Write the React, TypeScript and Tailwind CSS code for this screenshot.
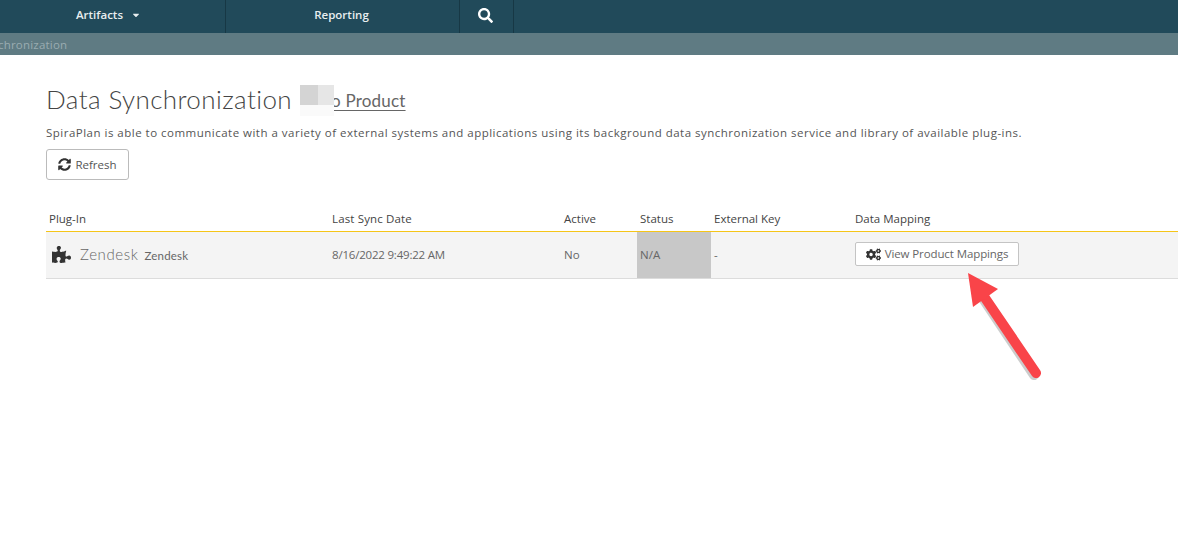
import { FaCaretDown, FaCogs, FaPuzzlePiece, FaSearch, FaSyncAlt } from "react-icons/fa";

const body = { fontFamily: '"Open Sans", "Liberation Sans", sans-serif' };
const display = { fontFamily: 'Lato, "Liberation Sans", sans-serif' };

export default function App() {
  return (
    <div className="relative min-h-[546px] overflow-hidden bg-white text-[#555]" style={body}>
      <nav className="flex h-[33px] bg-[#214a5a] text-[11.5px] font-semibold text-[#e8eef0]">
        <div className="flex w-[226px] items-center border-r border-[#173845] pb-[3px] pl-[76px]">
          <span>Artifacts</span>
          <FaCaretDown className="ml-[8px] text-[10px]" />
        </div>
        <div className="flex w-[234px] items-center justify-center border-r border-[#173845] pb-[3px] pr-[2px]">Reporting</div>
        <div className="flex w-[54px] items-center justify-center border-r border-[#173845] pb-[3px] pr-[2px]">
          <FaSearch className="text-[15px] text-white" />
        </div>
      </nav>
      <div className="flex h-[22px] items-center overflow-hidden bg-[#5f7b83] pt-[1px] text-[11.5px] tracking-[0.2px] text-[#9aacb1]">
        <span className="ml-[-2px]">chronization</span>
      </div>

      <main className="pl-[46px] pt-[28px]">
        <div className="flex h-[33px] items-center">
          <h1 className="text-[26px] font-light tracking-[0.4px] text-[#444]" style={display}>
            Data Synchronization
          </h1>
          <div className="relative ml-[39px] pt-[3px]">
            <a className="text-[17px] font-normal text-[#666] underline underline-offset-[3px]" style={display}>
              <span className="tracking-[0.2px]">o Product</span>
            </a>
            <div className="absolute left-[-31px] top-[0px] h-[31px] w-[34px]">
              <div className="flex h-[20px]">
                <div className="w-[18px] bg-[#d4d4d4]" />
                <div className="w-[16px] bg-[#e6e6e6]" />
              </div>
              <div className="h-[11px] bg-[#fafafa]" />
            </div>
          </div>
        </div>
        <p className="mt-[9px] h-[16px] text-[11.5px] leading-[16px] tracking-[0.49px] text-[#555]">
          SpiraPlan is able to communicate with a variety of external systems and applications using its background data synchronization service and library of available plug-ins.
        </p>
        <button className="mt-[8px] flex h-[31px] w-[83px] items-center justify-center gap-[4px] rounded-[3px] border border-[#bbb] bg-white text-[11.5px] text-[#555]">
          <FaSyncAlt className="text-[13px] text-[#333]" />
          Refresh
        </button>

        <table className="mt-[26px] w-[1132px] table-fixed border-collapse text-[11.5px]">
          <colgroup>
            <col className="w-[283px]" />
            <col className="w-[232px]" />
            <col className="w-[76px]" />
            <col className="w-[74px]" />
            <col className="w-[141px]" />
            <col />
          </colgroup>
          <thead>
            <tr className="h-[25px] border-b border-[#f5c518] text-left text-[#444]">
              <th className="pl-[3px] font-normal">Plug-In</th>
              <th className="pl-[3px] font-normal tracking-[0.15px]">Last Sync Date</th>
              <th className="pl-[3px] font-normal">Active</th>
              <th className="pl-[3px] font-normal">Status</th>
              <th className="pl-[3px] font-normal">External Key</th>
              <th className="pl-[3px] font-normal">Data Mapping</th>
            </tr>
          </thead>
          <tbody>
            <tr className="h-[47px] border-b border-[#dcdcdc] bg-[#f4f4f4] text-[#666]">
              <td className="pl-[6px]">
                <div className="flex items-center text-[#666]" style={display}>
                  <FaPuzzlePiece className="mr-[9px] text-[19px] text-[#333]" />
                  <span className="text-[15px] font-light tracking-[0.6px]">Zendesk</span>
                  <span className="ml-[6px] pt-[2px] text-[11.5px] tracking-[0.2px]">Zendesk</span>
                </div>
              </td>
              <td className="pl-[3px] tracking-[-0.2px]">8/16/2022 9:49:22 AM</td>
              <td className="pl-[3px]">No</td>
              <td className="bg-[#c8c8c8] pl-[3px]">N/A</td>
              <td className="pl-[3px]">-</td>
              <td className="pl-[3px]">
                <button className="mb-[1px] flex h-[24px] w-[164px] items-center justify-center gap-[4px] rounded-[2px] border border-[#c4c4c4] bg-white tracking-[-0.1px] text-[#666]">
                  <FaCogs className="text-[15px] text-[#333]" />
                  View Product Mappings
                </button>
              </td>
            </tr>
          </tbody>
        </table>
      </main>

      <svg className="absolute left-[950px] top-[260px]" width="110" height="130" viewBox="950 260 110 130" fill="none">
        <path d="M1034 375 L984 300" stroke="#555" strokeWidth="10" strokeLinecap="round" opacity="0.3" />
        <path d="M1036 373 L983 295" stroke="#f94449" strokeWidth="10" strokeLinecap="round" />
        <path d="M968 273 L998 289 L973 307 Z" fill="#f94449" />
      </svg>
    </div>
  );
}
